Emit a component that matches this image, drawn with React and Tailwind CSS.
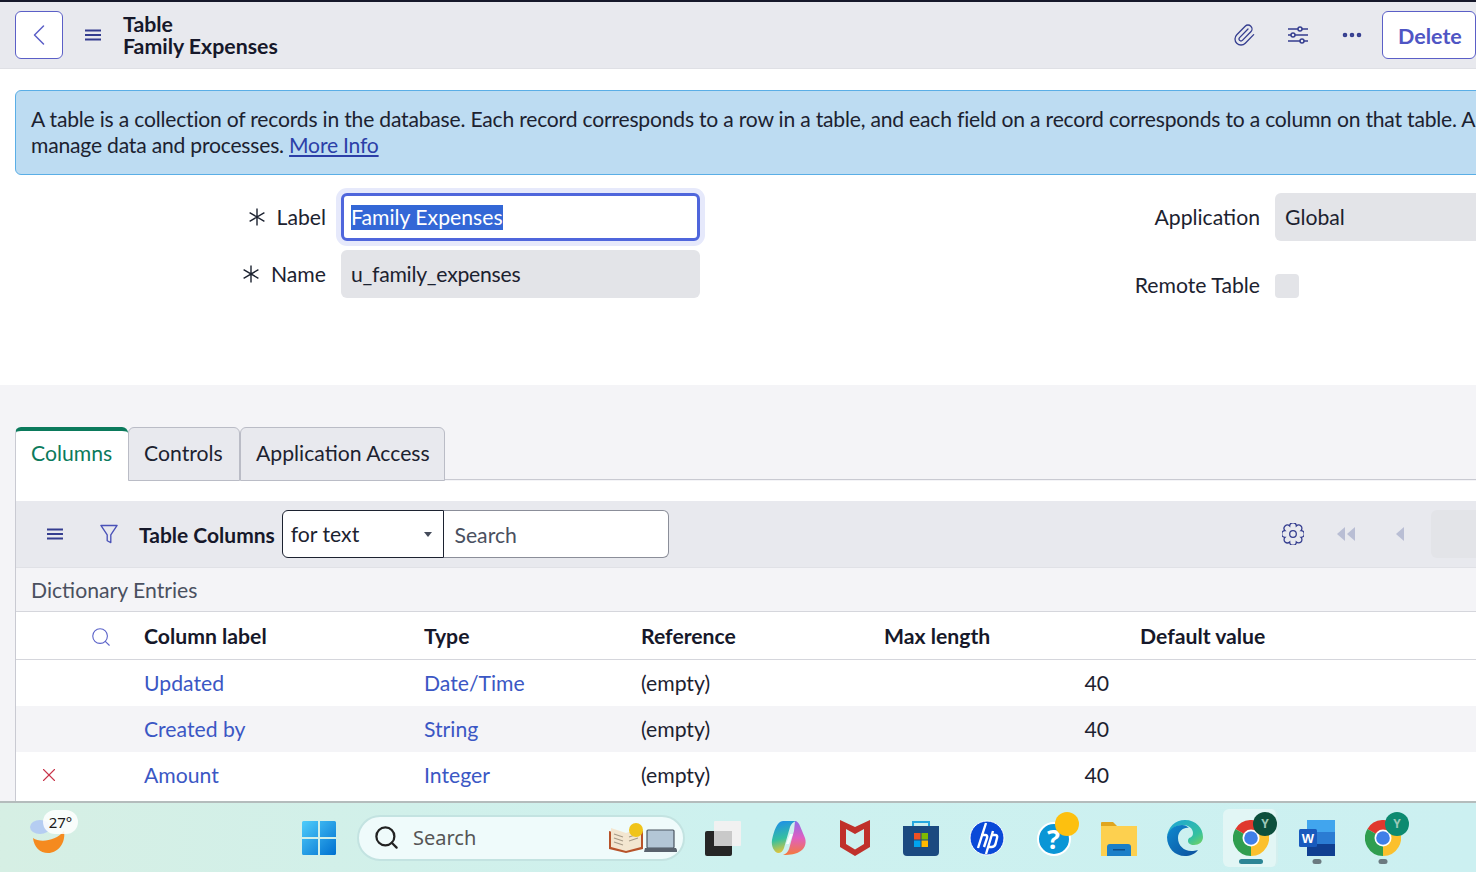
import { ChevronLeft, Paperclip, Ellipsis, Search, X } from 'lucide-react';

const Star = () => (
    <svg viewBox="0 0 20 20" className="w-[20px] h-[20px] shrink-0 text-[#1c2230]" fill="none" stroke="currentColor" strokeWidth="1.4">
        <path d="M10 1.5v17M2.6 5.700l14.800 8.600M17.400 5.700L2.600 14.300" />
    </svg>
);

const Burger = ({ className }) => (
    <svg viewBox="0 0 16 12" className={className} fill="none" stroke="currentColor" strokeWidth="2">
        <path d="M0 1.500h16M0 6h16M0 10.500h16" />
    </svg>
);

const Sliders = () => (
    <svg viewBox="0 0 24 24" className="w-[24px] h-[24px] text-[#343d8f]" fill="none" stroke="currentColor" strokeWidth="1.5">
        <path d="M2 6h10M16 6h6M2 12h3M9 12h13M2 18h12M18 18h4" />
        <circle cx="14" cy="6" r="2" /><circle cx="7" cy="12" r="2" /><circle cx="16" cy="18" r="2" />
    </svg>
);

const FunnelIcon = () => (
    <svg viewBox="0 0 20 22" className="w-[18px] h-[20px] text-[#4a52b8]" fill="none" stroke="currentColor" strokeWidth="1.500" strokeLinejoin="round">
        <path d="M1 1.500h18L12 12v8.500l-4-2V12z" />
    </svg>
);

// 8 lobed cog outline, same as the list settings button
const gearPath = () => {
    const n = 8;
    const r = 9.4;
    let d = '';
    for (let i = 0; i <= n; i++) {
        const a = (i / n) * Math.PI * 2 + Math.PI / 8;
        const x = (12 + r * Math.cos(a)).toFixed(2);
        const y = (12 + r * Math.sin(a)).toFixed(2);
        d += i === 0 ? `M${x} ${y}` : `A2.600 2.600 0 0 1 ${x} ${y}`;
    }
    return d + 'Z';
};

const Gear = () => (
    <svg viewBox="0 0 24 24" className="w-[22px] h-[22px] text-[#343d8f]" fill="none" stroke="currentColor" strokeWidth="1.400">
        <path d={gearPath()} />
        <circle cx="12" cy="12" r="3.600" />
    </svg>
);

const TriLeft = ({ className }) => (
    <svg viewBox="0 0 10 16" className={className} fill="currentColor"><path d="M9 1v14L1 8z" /></svg>
);

const WinLogo = () => (
    <svg viewBox="0 0 36 36" className="w-[36px] h-[36px]">
        <defs>
            <linearGradient id="win" x1="0" y1="0" x2="1" y2="1">
                <stop offset="0" stopColor="#4fcdfb" /><stop offset="1" stopColor="#0070d0" />
            </linearGradient>
        </defs>
        <path fill="url(#win)" d="M1 2.500A1.500 1.500 0 0 1 2.500 1H17v16H1zM19 1h14.500A1.500 1.500 0 0 1 35 2.500V17H19zM1 19h16v16H2.500A1.500 1.500 0 0 1 1 33.500zM19 19h16v14.500a1.500 1.500 0 0 1-1.500 1.500H19z" />
    </svg>
);

const CopyIcon = () => (
    <svg viewBox="0 0 38 36" className="w-[38px] h-[36px]">
        <rect x="1" y="11" width="27" height="25" rx="2" fill="#262626" />
        <rect x="10" y="1" width="27" height="25" rx="1" fill="#f1f1f1" />
        <rect x="10" y="11" width="18" height="15" fill="#c9c9c9" />
    </svg>
);

const Copilot = () => (
    <svg viewBox="0 0 36 36" className="w-[36px] h-[36px]">
        <defs>
            <linearGradient id="cp1" x1="0.3" y1="0" x2="0.5" y2="1">
                <stop offset="0" stopColor="#1e8fe8" /><stop offset="0.55" stopColor="#35c0a0" /><stop offset="1" stopColor="#f2c530" />
            </linearGradient>
            <linearGradient id="cp2" x1="0.5" y1="0" x2="0.5" y2="1">
                <stop offset="0" stopColor="#8f6be8" /><stop offset="0.5" stopColor="#e060c0" /><stop offset="1" stopColor="#f47a3c" />
            </linearGradient>
        </defs>
        <path fill="url(#cp2)" d="M24 1c2 0 4 2 5 5l5 12c2 6-1 12-6 14-3 2-8 3-16 3 3-1 5-3 6-6l5-18z" />
        <path fill="url(#cp1)" d="M12 1h13c-3 1-5 3-6 6l-6 21c-1 3-3 5-6 5-4-1-7-7-6-13C3 11 6 1 12 1z" />
        <path fill="#fff" opacity="0.85" d="M19 14h3l-4 10h-3z" />
    </svg>
);

const McAfee = () => (
    <svg viewBox="0 0 32 36" className="w-[32px] h-[36px]">
        <path fill="#c0312b" d="M1 0l15 7 15-7v27l-15 9-15-9zM7 9v15l9 5.500 9-5.500V9l-9 5z" fillRule="evenodd" />
    </svg>
);

const Store = () => (
    <svg viewBox="0 0 36 36" className="w-[36px] h-[36px]">
        <path d="M10 6V2h16v4" fill="none" stroke="#26a8e0" strokeWidth="2" />
        <path fill="#1b4a80" d="M0 6h36v26a4 4 0 0 1-4 4H4a4 4 0 0 1-4-4z" />
        <rect x="11" y="13" width="6.500" height="6.500" fill="#f25022" />
        <rect x="18.500" y="13" width="6.500" height="6.500" fill="#7fba00" />
        <rect x="11" y="20.500" width="6.500" height="6.500" fill="#00a4ef" />
        <rect x="18.500" y="20.500" width="6.500" height="6.500" fill="#ffb900" />
    </svg>
);

const HpLogo = () => (
    <svg viewBox="0 0 36 36" className="w-[36px] h-[36px]">
        <circle cx="18" cy="18" r="17" fill="#0a49d8" stroke="#fff" strokeWidth="1" />
        <path d="M17 3L9 28M12 15h4q3 0 2 3l-3 9M24 11L17 34M23 15h3q3 0 2 3l-1.500 6q-1 3-4 3h-3" fill="none" stroke="#fff" strokeWidth="2.400" />
    </svg>
);

const HelpIcon = () => (
    <div className="relative w-[42px] h-[36px] ml-[9px]">
        <div className="absolute left-0 bottom-0 w-[34px] h-[34px] rounded-full bg-[#0a96d6] border-2 border-white flex items-center justify-center text-white text-[27px] font-bold leading-none">?</div>
        <div className="absolute right-0 top-[-8px] w-[24px] h-[24px] rounded-full bg-[#fdc00f]" />
    </div>
);

const Folder = () => (
    <svg viewBox="0 0 36 36" className="w-[36px] h-[36px]">
        <path fill="#e0a51e" d="M0 3a1 1 0 0 1 1-1h11l4 4h20v6H0z" />
        <rect y="6" width="36" height="30" fill="#fdd04f" />
        <path fill="#1b7fc8" d="M6 36V27a3 3 0 0 1 3-3h18a3 3 0 0 1 3 3v9z" />
        <rect x="12" y="29" width="12" height="1.500" fill="#0d4f8a" />
    </svg>
);

const Edge = () => (
    <svg viewBox="0 0 36 36" className="w-[36px] h-[36px]">
        <defs>
            <linearGradient id="ed1" x1="0" y1="0" x2="1" y2="1">
                <stop offset="0" stopColor="#1ca3d8" /><stop offset="0.7" stopColor="#35c1a0" /><stop offset="1" stopColor="#79d45a" />
            </linearGradient>
            <linearGradient id="ed2" x1="0" y1="0" x2="1" y2="1">
                <stop offset="0" stopColor="#0f8ad0" /><stop offset="1" stopColor="#0c4f9c" />
            </linearGradient>
        </defs>
        <path fill="url(#ed1)" d="M18 0c11 0 18 8 18 17 0 5-4 8-9 8-4 0-6-2-6-4 0-5 5-2 5-8 0-5-5-8-10-8C8 5 2 10 0 17 1 7 8 0 18 0z" />
        <path fill="url(#ed2)" d="M0 17c1-7 7-12 15-12 3 0 5 1 7 3-5-1-11 3-11 10 0 8 7 14 15 13 2 0 4-1 5-1-3 4-8 6-13 6C8 36 0 28 0 17z" />
    </svg>
);

const Chrome = ({ badge }) => (
    <div className="relative w-[36px] h-[36px]">
        <svg viewBox="0 0 36 36" className="w-[36px] h-[36px]">
            <path fill="#e0382e" d="M18 18L2.400 9A18 18 0 0 1 33.600 9z" />
            <path fill="#fbc02d" d="M18 18L33.600 9A18 18 0 0 1 18 36z" />
            <path fill="#2f9e4f" d="M18 18L18 36A18 18 0 0 1 2.400 9z" />
            <circle cx="18" cy="18" r="8.500" fill="#fff" />
            <circle cx="18" cy="18" r="6.800" fill="#3f7fe8" />
        </svg>
        <div className={`absolute right-[-8px] top-[-8px] w-[24px] h-[24px] rounded-full flex items-center justify-center text-[12px] font-bold text-[#9cc8b8] ${badge}`}>Y</div>
    </div>
);

const Word = () => (
    <svg viewBox="0 0 36 36" className="w-[36px] h-[36px]">
        <rect x="8" y="0" width="28" height="12" fill="#41a5ee" />
        <rect x="8" y="12" width="28" height="12" fill="#2b7cd3" />
        <rect x="8" y="24" width="28" height="12" fill="#103f91" />
        <rect x="0" y="9" width="18" height="18" rx="1.500" fill="#185abd" />
        <text x="9" y="23" textAnchor="middle" fontSize="13" fontWeight="700" fill="#fff" fontFamily="Liberation Sans, sans-serif">W</text>
    </svg>
);

const BookLaptop = () => (
    <svg viewBox="0 0 68 30" className="w-[68px] h-[30px]">
        <path fill="#b8532a" d="M0 8l17 5 17-5v18l-17 4-17-4z" />
        <path fill="#f3e6d0" d="M2 5l15 5v18L2 24zM32 5l-15 5v18l15-4z" />
        <path d="M5 11l9 3M5 15l9 3M5 19l9 3M20 14l9-3M20 18l9-3" stroke="#a69a87" strokeWidth="1.200" />
        <circle cx="27" cy="7" r="7" fill="#f0c419" />
        <rect x="38" y="7" width="27" height="18" rx="1" fill="#b3c6d6" stroke="#4a5561" strokeWidth="1.200" />
        <path fill="#59626d" d="M36 25h31l2 4H35z" />
    </svg>
);

const TaskIcon = ({ children, active, running }) => (
    <div className="relative w-[66px] h-full flex items-center justify-center">
        {active && <span className="absolute inset-y-0 left-[5px] right-[6px] bg-[#e2f6f5] rounded-md border-r-2 border-[#d3efee]" />}
        <div className="relative">{children}</div>
        {running && <span className="absolute bottom-[3px] left-1/2 -translate-x-1/2 w-[9px] h-[5px] rounded-full bg-[#6b7a80]" />}
        {active && <span className="absolute bottom-[3px] left-1/2 -translate-x-1/2 w-[24px] h-[5px] rounded-full bg-[#2c8595]" />}
    </div>
);

const rows = [
    { label: 'Updated', type: 'Date/Time' },
    { label: 'Created by', type: 'String', alt: true },
    { label: 'Amount', type: 'Integer', remove: true },
];

const App = () => {
    return (
        <div className="w-[1476px] h-[872px] overflow-hidden flex flex-col bg-[#f4f4f7] font-['Lato',sans-serif] text-[21.200px] text-[#1c2230]">
            <div className="h-[801px] w-[1500px] shrink-0 flex flex-col overflow-hidden">
                {/* header */}
                <div className="h-[69px] shrink-0 border-t-2 border-b border-t-[#16182a] border-b-[#dfe0e5] bg-[#e8e9ee] flex items-center pl-[15px]">
                    <button className="w-[48px] h-[48px] rounded-md border border-[#5b5fc7] bg-white flex items-center justify-center">
                        <ChevronLeft className="w-[36px] h-[36px] text-[#5b5fc7]" strokeWidth={1} />
                    </button>
                    <Burger className="w-[16px] h-[12px] ml-[22px] text-[#343d8f]" />
                    <div className="ml-[22px] text-[21.300px] leading-[22px] font-bold text-[#16182a]">
                        <div>Table</div>
                        <div>Family Expenses</div>
                    </div>
                    <div className="ml-auto flex items-center">
                        <Paperclip className="w-[24px] h-[24px] text-[#343d8f]" strokeWidth={1.3} />
                        <div className="ml-[30px]"><Sliders /></div>
                        <Ellipsis className="w-[24px] h-[24px] ml-[30px] text-[#343d8f]" strokeWidth={2.6} />
                        <button className="ml-[18px] mr-[24px] w-[94px] h-[48px] rounded-md border border-[#5b5fc7] bg-white text-left pl-[15px] pt-[3px] text-[#4f55c4] font-bold text-[21.500px]">Delete</button>
                    </div>
                </div>

                {/* form area */}
                <div className="h-[316px] shrink-0 bg-white pt-[21px]">
                    <div className="mx-[15px] h-[85px] rounded-md border border-[#5aaee6] bg-[#bddcf2] pl-[15px] pt-[15px] leading-[26px] whitespace-nowrap overflow-hidden text-[21.100px] text-[#1c2230] tracking-[-0.2px]">
                        <div>A table is a collection of records in the database. Each record corresponds to a row in a table, and each field on a record corresponds to a column on that table. A</div>
                        <div>manage data and processes. <a className="text-[#2c3fa8] underline">More Info</a></div>
                    </div>
                    <div className="flex mt-[18px]">
                        <div className="w-[700px] shrink-0 flex flex-col gap-[9px]">
                            <div className="flex items-center h-[48px]">
                                <div className="w-[326px] flex justify-end items-center gap-[10px]"><Star /><span className="pt-[2px]">Label</span></div>
                                <div className="ml-[15px] w-[359px] h-[48px] rounded-md border-[3px] border-[#4f66dc] bg-white ring-[5px] ring-[#e6e9fb] flex items-center pl-[7px]">
                                    <span className="bg-[#3367d6] text-white leading-[25px]">Family Expenses</span>
                                </div>
                            </div>
                            <div className="flex items-center h-[48px]">
                                <div className="w-[326px] flex justify-end items-center gap-[10px]"><Star /><span className="pt-[2px]">Name</span></div>
                                <div className="ml-[15px] w-[359px] h-[48px] rounded-md bg-[#e3e4e8] flex items-center pl-[10px] pt-[2px] tracking-[-0.25px]">u_family_expenses</div>
                            </div>
                        </div>
                        <div className="flex flex-col">
                            <div className="flex items-center h-[48px]">
                                <div className="w-[560px] text-right pt-[2px]">Application</div>
                                <div className="ml-[15px] w-[225px] h-[48px] rounded-md bg-[#e3e4e8] flex items-center pl-[10px] pt-[2px]">Global</div>
                            </div>
                            <div className="flex items-center h-[24px] mt-[33px]">
                                <div className="w-[560px] text-right pb-[1px]">Remote Table</div>
                                <div className="ml-[15px] w-[24px] h-[24px] rounded bg-[#e3e4e8]" />
                            </div>
                        </div>
                    </div>
                </div>

                {/* tabs */}
                <div className="pt-[42px] pl-[15px] flex h-[96px] shrink-0">
                    <div className="w-[113px] h-[54px] bg-white rounded-t-md border-t-4 border-t-[#0b7a5c] border-l border-l-[#c9cad2] pl-[15px] pb-[4px] flex items-center text-[#0b7a5c] relative z-10">Columns</div>
                    <div className="w-[112px] h-[54px] bg-[#e8e9ee] rounded-t-md border border-[#babcc6] pl-[15px] flex items-center">Controls</div>
                    <div className="w-[205px] h-[54px] bg-[#e8e9ee] rounded-t-md border border-[#babcc6] pl-[15px] flex items-center">Application Access</div>
                    <div className="flex-1 h-[53px] border-b border-[#c9cad2]" />
                </div>

                {/* list panel */}
                <div className="ml-[15px] flex-1 border-l border-[#c9cad2] bg-white flex flex-col">
                    <div className="h-[20px] shrink-0" />
                    <div className="h-[67px] shrink-0 bg-[#e8e9ee] flex items-center border-b border-[#e0e1e6]">
                        <Burger className="w-[16px] h-[12px] ml-[31px] text-[#343d8f]" />
                        <div className="ml-[37px]"><FunnelIcon /></div>
                        <span className="ml-[21px] w-[137px] pt-[1px] font-bold text-[21px] text-[#16182a] whitespace-nowrap">Table Columns</span>
                        <div className="ml-[6px] w-[163px] h-[48px] rounded-l-md border border-[#1c2230] bg-white flex items-center pl-[8px] pt-[2px] relative">
                            for text
                            <span className="absolute right-[11px] top-[21px] w-0 h-0 border-x-[4px] border-x-transparent border-t-[5px] border-t-[#444b5a]" />
                        </div>
                        <div className="w-[225px] h-[48px] rounded-r-md border border-l-0 border-[#8b8e99] bg-white flex items-center pl-[10px] pt-[4px] text-[#4a5060]">Search</div>
                        <div className="ml-[613px]"><Gear /></div>
                        <div className="ml-[32px] flex text-[#b9bed4]">
                            <TriLeft className="w-[10px] h-[16px]" />
                            <TriLeft className="w-[10px] h-[16px]" />
                        </div>
                        <TriLeft className="w-[10px] h-[16px] ml-[39px] text-[#b9bed4]" />
                        <div className="ml-[26px] w-[69px] h-[48px] rounded-md bg-[#e3e4e8]" />
                    </div>
                    <div className="h-[44px] shrink-0 bg-[#f4f4f7] border-b border-[#d5d6dc] flex items-center pl-[15px] pt-[2px] text-[#4a5060]">Dictionary Entries</div>
                    <div className="h-[48px] shrink-0 border-b border-[#d5d6dc] grid grid-cols-[128px_280px_217px_243px_256px_1fr] items-center font-bold text-[#16182a] pt-[2px]">
                        <div className="flex justify-end pr-[32px]"><Search className="w-[22px] h-[22px] text-[#5b63c9]" strokeWidth={1.2} /></div>
                        <div>Column label</div>
                        <div>Type</div>
                        <div>Reference</div>
                        <div>Max length</div>
                        <div>Default value</div>
                    </div>
                    {rows.map((row) => (
                        <div key={row.label} className={`h-[46px] shrink-0 grid grid-cols-[128px_280px_217px_243px_225px_1fr] items-center pt-[2px] ${row.alt ? 'bg-[#f4f4f7]' : 'bg-white'}`}>
                            <div className="pl-[22px] -mt-[2px]">{row.remove && <X className="w-[22px] h-[22px] text-[#c8344a]" strokeWidth={1.2} />}</div>
                            <a className="text-[#3b57c4]">{row.label}</a>
                            <a className="text-[#3b57c4]">{row.type}</a>
                            <div>(empty)</div>
                            <div className="text-right">40</div>
                            <div />
                        </div>
                    ))}
                </div>
            </div>

            {/* taskbar */}
            <div className="flex-1 border-t-2 border-[#b4bcbc] bg-gradient-to-r from-[#d6efe4] via-[#cdf1ef] to-[#ccf0f1] flex items-center font-['Noto_Sans',sans-serif]">
                <div className="relative w-[301px] h-full shrink-0">
                    <svg viewBox="0 0 36 36" className="absolute left-[30px] top-[14px] w-[36px] h-[36px]">
                        <path d="M3 21C10 26 26 24 34 14 36 26 28 36 18 36 10 36 4 30 3 21z" fill="#f58a1f" />
                        <ellipse cx="10" cy="10" rx="10" ry="7" fill="#b5cdf2" />
                    </svg>
                    <div className="absolute left-[43px] top-[7px] h-[24px] w-[35px] rounded-full bg-white/85 flex items-center justify-center text-[15px] text-[#1a1a1a]">27°</div>
                </div>
                <WinLogo />
                <div className="ml-[20px] w-[328px] h-[46px] rounded-full bg-[#effbfb] border-2 border-[#c3e3e1] flex items-center pl-[14px] pr-[6px] text-[#555] text-[20px] shrink-0">
                    <Search className="w-[27px] h-[27px] text-[#222]" strokeWidth={2} />
                    <span className="ml-[13px]">Search</span>
                    <div className="ml-auto"><BookLaptop /></div>
                </div>
                <div className="ml-[5px] h-[58px] flex items-center">
                    <TaskIcon><CopyIcon /></TaskIcon>
                    <TaskIcon><Copilot /></TaskIcon>
                    <TaskIcon><McAfee /></TaskIcon>
                    <TaskIcon><Store /></TaskIcon>
                    <TaskIcon><HpLogo /></TaskIcon>
                    <TaskIcon><HelpIcon /></TaskIcon>
                    <TaskIcon><Folder /></TaskIcon>
                    <TaskIcon><Edge /></TaskIcon>
                    <TaskIcon active><Chrome badge="bg-[#0d4f3c]" /></TaskIcon>
                    <TaskIcon running><Word /></TaskIcon>
                    <TaskIcon running><Chrome badge="bg-[#0d8a70]" /></TaskIcon>
                </div>
            </div>
        </div>
    );
};

export default App;
